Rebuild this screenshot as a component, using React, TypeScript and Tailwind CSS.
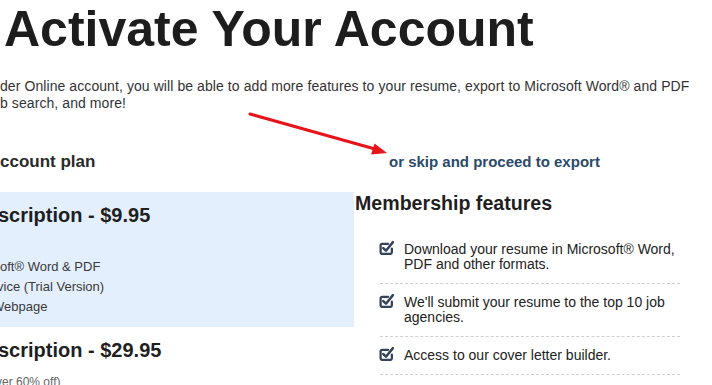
import React from 'react';

const features: string[][] = [
    ['Download your resume in Microsoft® Word,', 'PDF and other formats.'],
    ["We'll submit your resume to the top 10 job", 'agencies.'],
    ['Access to our cover letter builder.'],
];

const CheckIcon: React.FC = () => (
    <svg width="15" height="15" viewBox="0 0 14 14" className="shrink-0 -mt-[2px]">
        <path
            d="M8.5 3.5H3a1.5 1.5 0 0 0-1.5 1.5v6.5A1.5 1.5 0 0 0 3 13h7.5a1.5 1.5 0 0 0 1.5-1.5V8"
            fill="none"
            stroke="#33445a"
            strokeWidth="2.1"
            strokeLinecap="round"
        />
        <path
            d="M4 7.5l2.5 2.5L13 2"
            fill="none"
            stroke="#33445a"
            strokeWidth="2.3"
            strokeLinecap="round"
            strokeLinejoin="round"
        />
    </svg>
);

export default function App() {
    return (
        <div className="relative w-[712px] h-[385px] overflow-hidden bg-white font-['Liberation_Sans',Arial,sans-serif] text-[#333]">
            <h1 className="ml-[4px] mt-[4px] text-[50px] leading-[50px] font-bold text-[#1d1d1d] whitespace-nowrap">
                Activate Your Account
            </h1>

            <p className="mt-[24px] text-[14px] leading-[17px] tracking-[0.08px] whitespace-nowrap text-[#333]">
                der Online account, you will be able to add more features to your resume, export to Microsoft Word® and PDF
                <br />
                b search, and more!
            </p>

            <div className="mt-[40px] flex items-baseline">
                <h2 className="w-[389px] text-[17px] leading-[20px] font-bold text-[#2a2a2a]">ccount plan</h2>
                <a className="text-[15px] leading-[20px] font-bold text-[#2b4a69] whitespace-nowrap">
                    or skip and proceed to export
                </a>
            </div>

            <div className="mt-[20px] flex">
                <div className="w-[354px] shrink-0">
                    <div className="bg-[#e3effc] pt-[11px] pb-[10px]">
                        <h3 className="-ml-[2px] text-[20px] leading-[24px] font-bold text-[#1f1f1f] whitespace-nowrap">
                            scription - $9.95
                        </h3>
                        <ul className="mt-[30px] text-[13px] leading-[20px] text-[#3a3a3a] whitespace-nowrap">
                            <li>oft® Word &amp; PDF</li>
                            <li className="-ml-[3px]">vice (Trial Version)</li>
                            <li className="-ml-[8px]">Webpage</li>
                        </ul>
                    </div>
                    <h3 className="mt-[11px] -ml-[2px] text-[20px] leading-[24px] font-bold text-[#1f1f1f] whitespace-nowrap">
                        scription - $29.95
                    </h3>
                    <p className="mt-[12px] -ml-[4px] text-[12px] leading-[16px] text-[#666] whitespace-nowrap">
                        ver 60% off)
                    </p>
                </div>

                <div className="ml-px w-[345px]">
                    <h2 className="text-[19.6px] leading-[22px] font-bold text-[#1f1f1f] whitespace-nowrap">
                        Membership features
                    </h2>
                    <ul className="mt-[17px] ml-[25px] w-[300px]">
                        {features.map((lines, i) => (
                            <li
                                key={i}
                                className="flex py-[11px] border-b border-dashed border-[#cfcfcf] text-[14px] leading-[15px] text-[#222]"
                            >
                                <div className="-ml-px">
                                    <CheckIcon />
                                </div>
                                <span className="ml-[10px] whitespace-nowrap">
                                    {lines.map((l, j) => (
                                        <React.Fragment key={j}>
                                            {j > 0 && <br />}
                                            {l}
                                        </React.Fragment>
                                    ))}
                                </span>
                            </li>
                        ))}
                    </ul>
                </div>
            </div>

            {/* red annotation arrow */}
            <svg className="absolute left-0 top-0 pointer-events-none" width="712" height="385">
                <line x1="250" y1="114" x2="375" y2="149" stroke="#e8141b" strokeWidth="3" strokeLinecap="round" />
                <polygon points="387,153 371,154.5 374.5,143.5" fill="#e8141b" />
            </svg>
        </div>
    );
}
